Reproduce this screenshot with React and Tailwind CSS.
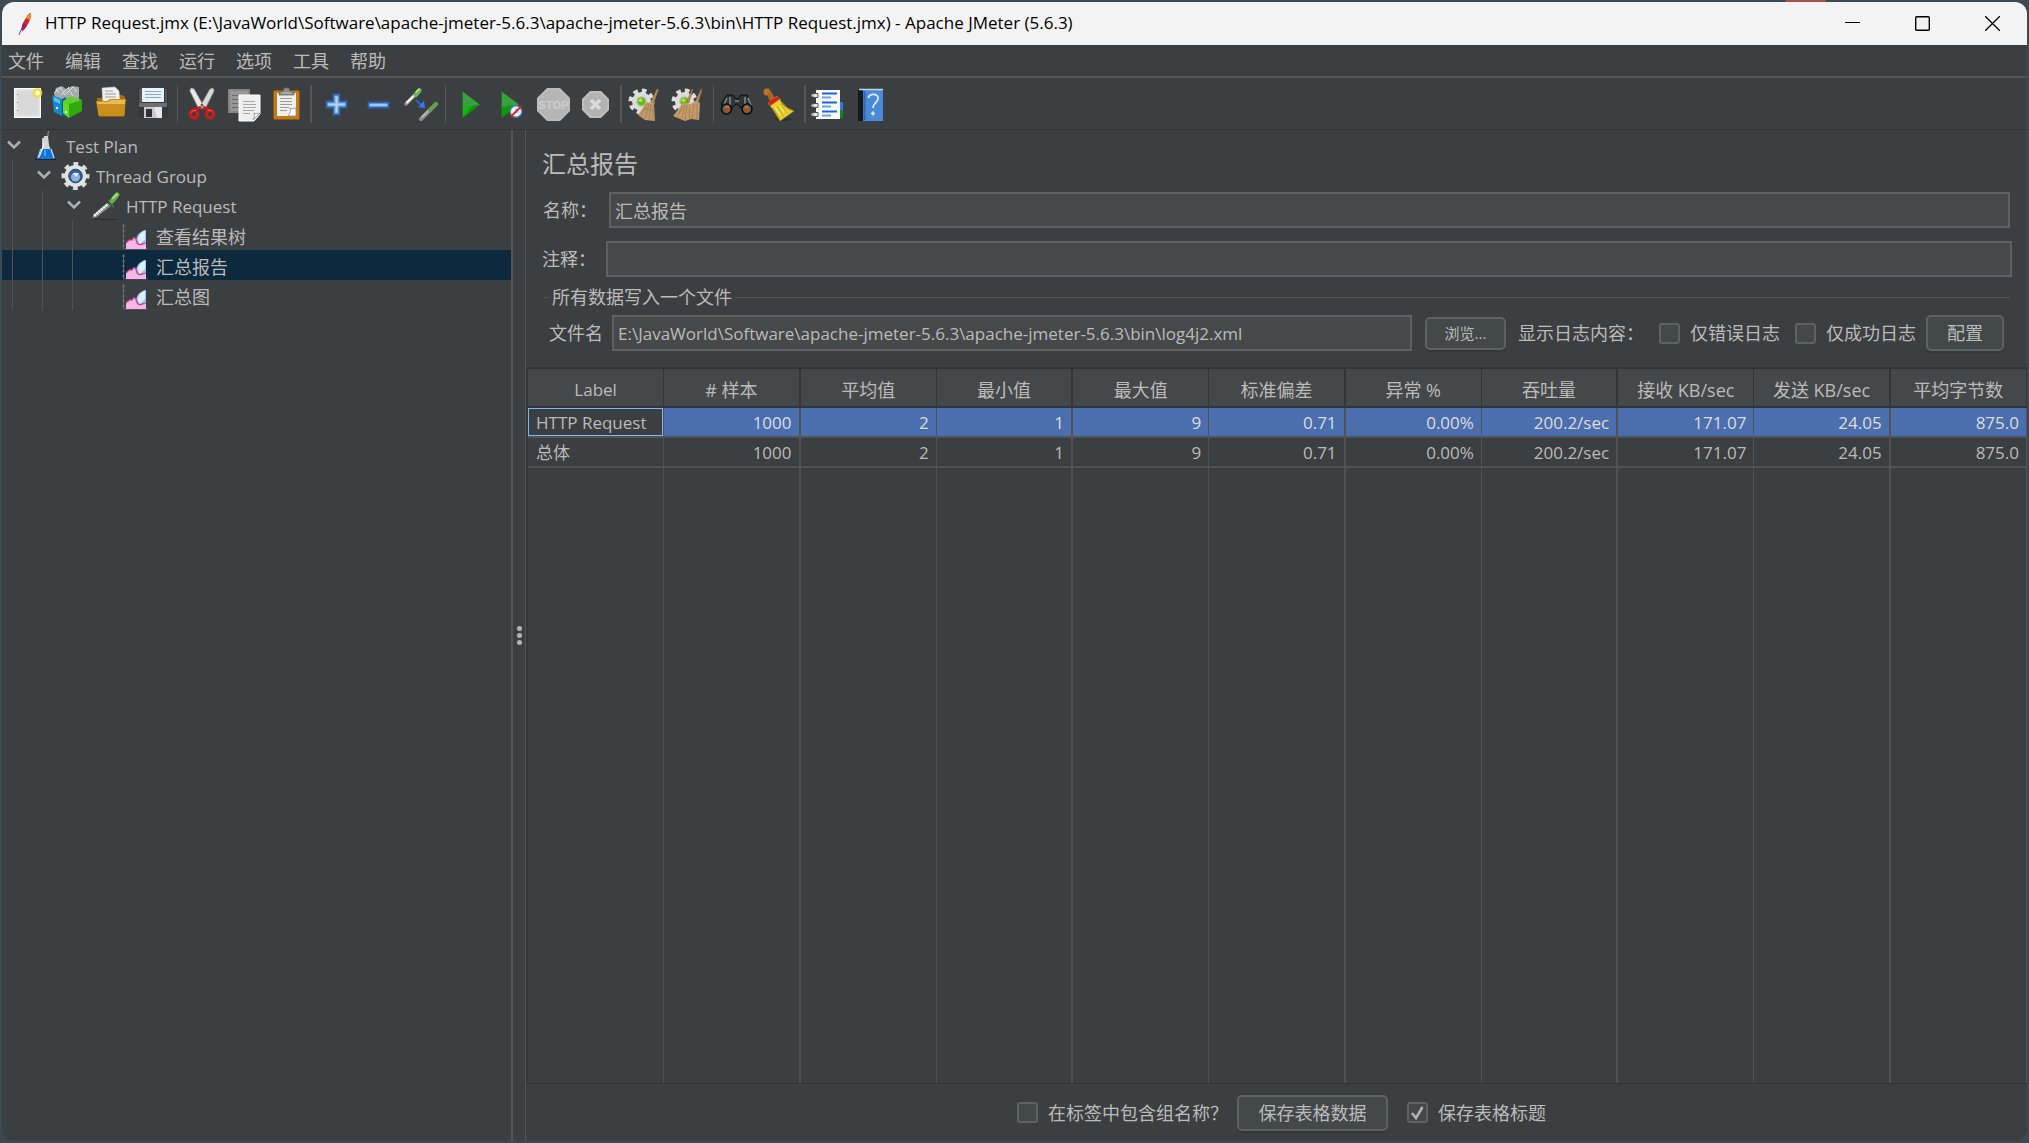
import { useState } from "react";

const MENUS = ["文件", "编辑", "查找", "运行", "选项", "工具", "帮助"];

const COLUMNS = [
  "Label",
  "# 样本",
  "平均值",
  "最小值",
  "最大值",
  "标准偏差",
  "异常 %",
  "吞吐量",
  "接收 KB/sec",
  "发送 KB/sec",
  "平均字节数",
];

const ROWS = [
  ["HTTP Request", "1000", "2", "1", "9", "0.71", "0.00%", "200.2/sec", "171.07", "24.05", "875.0"],
  ["总体", "1000", "2", "1", "9", "0.71", "0.00%", "200.2/sec", "171.07", "24.05", "875.0"],
];

const TREE = [
  { label: "Test Plan", depth: 0, icon: FlaskIcon, open: true },
  { label: "Thread Group", depth: 1, icon: GearIcon, open: true },
  { label: "HTTP Request", depth: 2, icon: PipetteIcon, open: true },
  { label: "查看结果树", depth: 3, icon: ChartIcon },
  { label: "汇总报告", depth: 3, icon: ChartIcon },
  { label: "汇总图", depth: 3, icon: ChartIcon },
];

const TOOLBAR = [
  [
    ["New", NewIcon],
    ["Templates", TemplatesIcon],
    ["Open", OpenIcon],
    ["Save", SaveIcon],
  ],
  [
    ["Cut", CutIcon],
    ["Copy", CopyIcon],
    ["Paste", PasteIcon],
  ],
  [
    ["Expand All", PlusIcon],
    ["Collapse All", MinusIcon],
    ["Toggle", ToggleIcon],
  ],
  [
    ["Start", StartIcon],
    ["Start no pauses", StartNoPauseIcon],
    ["Stop", StopIcon],
    ["Shutdown", ShutdownIcon],
  ],
  [
    ["Clear", ClearIcon],
    ["Clear All", ClearAllIcon],
  ],
  [
    ["Search", BinocularsIcon],
    ["Reset Search", BroomIcon],
  ],
  [
    ["Function Helper", FunctionIcon],
    ["Help", HelpIcon],
  ],
];

function Icon({ children }) {
  return (
    <svg className="h-[34px] w-[34px] overflow-visible" viewBox="0 0 34 34" fill="none" aria-hidden="true">
      {children}
    </svg>
  );
}

function NewIcon() {
  return (
    <Icon>
      <rect x="5.500" y="3.500" width="26" height="29" fill="#e4e4e4" stroke="#fff" />
      <rect x="9" y="6" width="20" height="24" fill="#d9d9d9" />
      <path d="M8 9.500h1M8 17.500h1M8 25.500h1" stroke="#8a8a8a" />
      <circle cx="28.500" cy="8" r="4.800" fill="#efdc35" opacity=".85" />
      <circle cx="28.500" cy="8" r="2.400" fill="#fffde0" />
    </Icon>
  );
}

function TemplatesIcon() {
  return (
    <Icon>
      <path d="M3 9 5 3l6-2 4 3 6-3 7 1v12l-6 4H6z" fill="#a5abad" />
      <path d="m5 4 3 4m1-6 5 8m3-7 5 8m0-9 4 5m-16 3 8-8m-4 8 8-8m-19 6 6-5" stroke="#d8dcdd" />
      <path d="m1 10 10 4v17l-8-4z" fill="#1488c8" />
      <path d="m3 12 6 3v4l-6-3z" fill="#5cc0f0" />
      <path d="m11 14 4-2v20l-4-1z" fill="#0b5f94" />
      <path d="m12 16 7-4 12 3v11l-13 7-6-5z" fill="#2fa90b" />
      <path d="m12 16 6 3v14l-6-5z" fill="#5fdc22" />
      <path d="m12 16 7-4 12 3-13 4z" fill="#5fd02c" />
      <circle cx="15" cy="27" r="1.200" fill="#e9ffe0" />
      <circle cx="6" cy="23" r="1.200" fill="#d8f2ff" />
    </Icon>
  );
}

function OpenIcon() {
  return (
    <Icon>
      <path d="M4 13h5v-3h20l3 2v18H5z" fill="#a86f08" />
      <path d="m9 3 13-1 4 4 1 13H10z" fill="#f1f1f1" stroke="#c9c9c9" strokeWidth=".6" />
      <path d="M12 6h8M12 9h11M12 12h11" stroke="#9a9a9a" />
      <path d="M3 16h11l3-2h16l-2 18H6z" fill="#c98f1a" />
      <path d="M4 17h11l3-2h14l-.4 4H4.500z" fill="#e8bd58" />
      <path d="M6 31.500h25" stroke="#8b5b04" />
    </Icon>
  );
}

function SaveIcon() {
  return (
    <Icon>
      <path d="M3 3h30v30H5l-2-3z" fill="#36373a" />
      <path d="M4 4h3v14H4zM30 4h2v14h-2z" fill="#55575b" />
      <path d="M7 3h22v14H7z" fill="#e9f1f9" />
      <path d="M10 6.500h16M10 9.500h16M10 12.500h16" stroke="#86a9cc" />
      <path d="M4 18h28v4H4z" fill="#6d6f73" />
      <path d="M9 22h18v11H9z" fill="#c9cacc" />
      <path d="M11 24h6v8h-6z" fill="#303134" />
      <path d="M19 22h8v11h-5z" fill="#e8e8e9" />
    </Icon>
  );
}

function CutIcon() {
  return (
    <Icon>
      <path d="m6 1 3 1 9 16-2 4-3-2L5 4z" fill="#e8e8e6" stroke="#a8a8a6" strokeWidth=".7" />
      <path d="m28 1-3 1-9 16 2 4 3-2 8-16z" fill="#d9d9d7" stroke="#9c9c9a" strokeWidth=".7" />
      <circle cx="17" cy="18" r="1.300" fill="#55585a" />
      <ellipse cx="9" cy="27" rx="3.600" ry="3.900" stroke="#d81818" strokeWidth="3" />
      <ellipse cx="25" cy="27" rx="3.600" ry="3.900" stroke="#d81818" strokeWidth="3" />
      <path d="m10 23 6-3m8 3-6-3" stroke="#d81818" strokeWidth="3" />
      <path d="M6 25.500q2-3 5-2M23 23.500q3-1 4 1" stroke="#ff7064" strokeWidth=".8" />
    </Icon>
  );
}

function CopyIcon() {
  return (
    <Icon>
      <path d="M1 2h22v24H1z" fill="#858585" />
      <path d="M3 4h18v20H3z" fill="#979797" />
      <path d="M5 8.500h13M5 12.500h7M5 16.500h7M5 20.500h7" stroke="#6b6b6b" />
      <path d="M12 8h21v19l-6 7H12z" fill="#efefef" stroke="#fff" />
      <path d="M16 14.500h12M16 17.500h13M16 20.500h13M16 23.500h11M16 26.500h7" stroke="#a8a8a8" />
      <path d="M33 26c-2 1-4 1-6 0 1 3 0 5-1 7z" fill="#fff" stroke="#8d8d8d" strokeWidth=".8" />
    </Icon>
  );
}

function PasteIcon() {
  return (
    <Icon>
      <rect x="4.500" y="3.500" width="26" height="29" rx="1.500" fill="#c07c1c" stroke="#8d5508" />
      <path d="M8 6h19v23H8z" fill="#f0f0ee" />
      <path d="M11 11.500h12M11 14.500h12M11 17.500h12M11 20.500h9M11 23.500h7" stroke="#9b9b99" />
      <path d="M27 21c-2 1-4 1-6 0 1 3 0 5-2 8h8z" fill="#fff" stroke="#8d8d8b" strokeWidth=".8" />
      <path d="M10 8V5h4l1-4h5l1 4h4v3z" fill="#8e8f8a" stroke="#5d5e5a" strokeWidth=".7" />
      <path d="M12 6h11" stroke="#c2c3be" />
    </Icon>
  );
}

function PlusIcon() {
  return (
    <Icon>
      <path d="M14.500 7.500h6v7h7v6h-7v7h-6v-7h-7v-6h7z" fill="#8fbbe8" stroke="#2c63b0" strokeWidth="1.800" />
      <path d="M17.500 10v15M10 17.500h15" stroke="#b4d2f2" strokeWidth="1.200" />
    </Icon>
  );
}

function MinusIcon() {
  return (
    <Icon>
      <path d="M7.500 15.500h20v5h-20z" fill="#9dc5ee" stroke="#2c63b0" strokeWidth="1.800" />
    </Icon>
  );
}

function ToggleIcon() {
  return (
    <Icon>
      <path d="m3 17 10-10" stroke="#8a8d8b" strokeWidth="3.600" strokeLinecap="round" />
      <path d="m4 15.500 9-9" stroke="#f0f1ef" strokeWidth="2.400" strokeLinecap="round" />
      <path d="m12.500 8 4-4.500" stroke="#6db648" strokeWidth="4.400" strokeLinecap="round" />
      <path d="m13 5 3-3" stroke="#c5e8b0" strokeWidth="1.400" strokeLinecap="round" />
      <path d="m13 13 5 5" stroke="#2f6fe0" strokeWidth="1.600" />
      <path d="m22 21-7-1 6-6z" fill="#2f7af5" />
      <path d="m18 32 9-9" stroke="#8b8e8b" strokeWidth="4" strokeLinecap="round" />
      <path d="m19 30 8-8" stroke="#bcbebb" strokeWidth="1.700" strokeLinecap="round" />
      <path d="m27 23 6-6" stroke="#6b9a50" strokeWidth="4.200" strokeLinecap="round" />
    </Icon>
  );
}

function StartIcon() {
  return (
    <Icon>
      <path d="m9.500 4.500 17.500 13L9.500 31z" fill="#0c9a0c" />
      <path d="m10 5 16.500 12.500L10 20z" fill="#3a9f40" />
      <path d="m10 20 9-1.500-6 8-3 3z" fill="#14b414" />
    </Icon>
  );
}

function StartNoPauseIcon() {
  return (
    <Icon>
      <path d="M6.500 4.500 24 17.500 6.500 31z" fill="#0c9a0c" />
      <path d="M7 5 23.500 17.500 7 20z" fill="#3a9f40" />
      <circle cx="21" cy="24.500" r="5.800" fill="#f2f6fb" stroke="#4a7fb8" strokeWidth="1.400" />
      <path d="M21 21v4h3" stroke="#7b9cc0" />
      <path d="m15.500 30 11-11" stroke="#dc1f1f" strokeWidth="1.800" />
    </Icon>
  );
}

function StopIcon() {
  return (
    <Icon>
      <path d="M10 1h13l10 10v13L23 34H10L0 24V11z" fill="#bcbcbc" />
      <path d="M11 3h11l9 9v11l-9 9H11l-9-9V12z" fill="#b5b5b5" />
      <text
        x="16.500"
        y="22"
        textAnchor="middle"
        fontFamily="Liberation Sans"
        fontSize="11"
        fontWeight="bold"
        fill="#cdcdcd"
      >
        STOP
      </text>
    </Icon>
  );
}

function ShutdownIcon() {
  return (
    <Icon>
      <path d="M11 4h11l8 8v11l-8 8H11l-8-8V12z" fill="#bebebe" />
      <path d="M12 6h9l7 7v9l-7 7h-9l-7-7v-9z" fill="#b3b3b3" />
      <path d="m12 13 9 9m0-9-9 9" stroke="#dadada" strokeWidth="3.800" />
    </Icon>
  );
}

function Cog() {
  return (
    <>
      <circle cx="12.500" cy="14.500" r="10.500" stroke="#dededd" strokeWidth="5" strokeDasharray="4.400 3.850" />
      <circle cx="12.500" cy="14.500" r="9.500" fill="#dcdcdb" />
      <circle cx="12.500" cy="14.500" r="5.500" fill="#c0c5bb" />
      <circle cx="12.500" cy="14.500" r="4" fill="#6cbb12" />
      <circle cx="11.500" cy="13.300" r="1.700" fill="#b0ea62" />
    </>
  );
}

function ClearIcon() {
  return (
    <Icon>
      <Cog />
      <path d="m28 2 1.500.500-5 14-3-1z" fill="#b98f5c" stroke="#87633a" strokeWidth=".6" />
      <path d="m18 15 7 2 1 17-10-1-7-5z" fill="#c39a69" />
      <path d="m18 17-6 11m8-11-4 15m6-15-2 16m4-15v15M15 21l9 3" stroke="#a27d4c" strokeWidth=".8" />
    </Icon>
  );
}

function ClearAllIcon() {
  return (
    <Icon>
      <g transform="translate(1)">
        <Cog />
      </g>
      <path d="m21 2 1 .500-4 13-2-1zM30 2l1 .500-4 14-3-1z" fill="#b98f5c" stroke="#87633a" strokeWidth=".6" />
      <path d="m12 16 7 1 6-3 4 2-1 17-8-1-6 2-12-5z" fill="#c39a69" />
      <path d="M12 18 7 29m7-11-3 13m5-13-2 15m5-13-1 12m5-15-2 15m5-16v16" stroke="#a27d4c" strokeWidth=".8" />
    </Icon>
  );
}

function BinocularsIcon() {
  return (
    <Icon>
      <path d="M6 8h6l3 4h2l3-4h6l4 9-6 5-5-2-3-3h-1l-3 3-6 2-6-5z" fill="#333436" stroke="#08090a" />
      <path d="m6 11-3 7m6-8v9M24 10v9m3-8 3 7M14 14h4" stroke="#858789" strokeWidth="1.600" />
      <circle cx="5.500" cy="22" r="5" fill="#5d5e60" stroke="#08090a" strokeWidth="1.600" />
      <circle cx="26" cy="22" r="5" fill="#5d5e60" stroke="#08090a" strokeWidth="1.600" />
      <circle cx="6" cy="22.500" r="2.900" fill="#a45417" />
      <circle cx="25.500" cy="22.500" r="2.900" fill="#a45417" />
      <path d="M4 21q1-2 4-1m16 0q2-1 3 1" stroke="#d49a68" />
    </Icon>
  );
}

function BroomIcon() {
  return (
    <Icon>
      <path d="M11 31h19l-5 3H15z" fill="#2f3132" />
      <circle cx="4" cy="5" r="3.700" fill="#b9762f" stroke="#784714" strokeWidth=".8" />
      <path d="m4 7 4-3 4 8-5 3z" fill="#a9682a" />
      <path d="m5 16 9-7 3 3c2 7 7 9 14 12l-14 10c-3-5-5-9-9-14z" fill="#e9cf2f" stroke="#a98e0c" strokeWidth=".7" />
      <path d="m10 21 7 11m-3-13 7 11m-4-13 8 10m-6-12 8 9" stroke="#b99c12" strokeWidth=".8" />
      <path d="m12 20 5 8m-1-10 5 7" stroke="#f8ec84" strokeWidth="1.200" />
      <path d="m5 15 10-6 2 3-10 7z" fill="#d22020" />
    </Icon>
  );
}

function FunctionIcon() {
  return (
    <Icon>
      <path d="M27 15h3v8h-3z" fill="#2f7ce0" />
      <path d="M27 23h3v8h-3z" fill="#0c8a12" />
      <path d="M3 3h24v29H3z" fill="#fafafa" />
      <path d="M9 6.500h15M9 15.500h15M9 24.500h15" stroke="#1a62e8" strokeWidth="2" />
      <path d="M9 10.500h9M9 19.500h9M9 28.500h9" stroke="#6da0f4" strokeWidth="2" />
      <path d="M0 6.500h5v4H0zM0 16.500h5v4H0zM0 25.500h5v4H0z" fill="#e4e4e4" stroke="#555" />
      <path d="M-1.500 8.500h2M-1.500 18.500h2M-1.500 27.500h2" stroke="#dcdcdc" strokeWidth="2" />
    </Icon>
  );
}

function HelpIcon() {
  return (
    <Icon>
      <path d="M3 2h7v32H3z" fill="#17181a" />
      <path d="M8 2h20v32H8z" fill="#4a8bd8" />
      <path d="M4 2.500h24" stroke="#c9d2dc" strokeWidth="1.400" />
      <path d="M9.500 4v29" stroke="#2f67ad" strokeWidth="2" />
      <path d="M13.500 11c0-5 10-5 9.500.500 0 4-5 4.500-5 9.500" stroke="#dcebff" strokeWidth="1.800" />
      <path d="M16 26.500h4M18 24.500v4" stroke="#dcebff" strokeWidth="1.600" />
    </Icon>
  );
}

function TreeIcon({ children }) {
  return (
    <svg className="ml-[10px] h-[30px] w-[33px] overflow-visible" viewBox="0 0 33 30" fill="none" aria-hidden="true">
      {children}
    </svg>
  );
}

function FlaskIcon() {
  return (
    <TreeIcon>
      <path d="M4 29.500h21" stroke="#222" />
      <path d="M13 6h4l1 9 5 14H7l5-14z" fill="#cfd6da" />
      <path d="M17 6V3l1-2" stroke="#9a9da0" />
      <path d="M11 19h9l3.500 10h-17z" fill="#1273dc" />
      <path d="M12 8v9l-4 10" stroke="#fff" strokeWidth="1.400" />
      <path d="m7 28 3-9M23 28l-3-9" stroke="#9ecbf7" strokeWidth="1.600" />
      <path d="M14 20v6" stroke="#67b1ff" strokeWidth="1.500" />
    </TreeIcon>
  );
}

function GearIcon() {
  return (
    <TreeIcon>
      <circle
        cx="14.500"
        cy="16"
        r="11.500"
        stroke="#dcdcdb"
        strokeWidth="5"
        strokeDasharray="4.520 4.510"
        strokeDashoffset="2.260"
      />
      <circle cx="14.500" cy="16" r="11" fill="#e2e2e1" />
      <circle cx="14.500" cy="16" r="6.800" fill="#315a99" stroke="#27477a" />
      <circle cx="14.500" cy="17" r="4.500" fill="#8fb2da" />
      <path d="M12 13h6l-3 4z" fill="#e4effa" />
    </TreeIcon>
  );
}

function PipetteIcon() {
  return (
    <TreeIcon>
      <path d="M3 29.500h22" stroke="#2a2c2d" />
      <path d="m1 28 2-4 13-11 4 3L6 27z" fill="#858785" />
      <path d="m3 26 14-12" stroke="#f4f5f3" strokeWidth="2.400" strokeDasharray="2.400 .6" />
      <path d="m18 11 4 5" stroke="#3c6e2a" strokeWidth="2.600" strokeLinecap="round" />
      <path d="m21 11 5-6" stroke="#66ad48" strokeWidth="5" strokeLinecap="round" />
      <path d="m22 8 4-4" stroke="#a6dc8a" strokeWidth="2.200" strokeLinecap="round" />
    </TreeIcon>
  );
}

function ChartIcon() {
  return (
    <TreeIcon>
      <path d="M2.500 4v25h24" stroke="#66686a" strokeWidth="1" />
      <path d="M1 6h3M1 11h3M1 16h3M1 21h3M1 26h3" stroke="#77797b" strokeWidth=".8" />
      <path d="M15 22c0-6 3-10 9-12h1v18h-9z" fill="#9cc5f3" />
      <path d="M17 20c0-4 3-8 7-9v8l-5 5z" fill="#e0eefd" />
      <path d="M5 23c2-2 3-4 5-3s2-4 4-2 1 4 3 6c3 2 5-1 8-1v6H5z" fill="#f5b6ea" />
      <path d="M5 23c2-2 3-4 5-3s2-4 4-2 1 4 3 6c3 2 5-1 8-1" stroke="#c4407f" strokeWidth="1.200" />
    </TreeIcon>
  );
}

function TreeRow({ node, selected, onSelect }) {
  const NodeIcon = node.icon;
  return (
    <li>
      <button
        type="button"
        onClick={onSelect}
        className={`flex h-[30px] w-full items-center pl-[5px] text-left ${selected ? "bg-[#0d293e]" : ""}`}
      >
        {Array.from({ length: node.depth }, (_, i) => (
          <span key={i} className="h-full w-[30px] pl-[5px]">
            <span className="block h-full border-l border-[#505355]" />
          </span>
        ))}
        <svg className="h-[10px] w-[14px]" viewBox="0 0 14 10" fill="none" aria-hidden="true">
          {node.open && <path d="m1 1.500 6 6 6-6" stroke="#adadad" strokeWidth="2.600" />}
        </svg>
        <NodeIcon />
        <span className={`ml-[2px] pt-[3px] ${node.depth === 3 ? "text-[18px]" : ""}`}>{node.label}</span>
      </button>
    </li>
  );
}

function TextField({ id, value, className = "" }) {
  return (
    <input
      id={id}
      type="text"
      defaultValue={value}
      className={`h-9 min-w-0 flex-1 border-2 border-[#5f6161] bg-[#45494a] px-1 text-[#bbbbbb] outline-none ${className}`}
    />
  );
}

function Check({ label, checked = false }) {
  return (
    <label className="flex items-center gap-[10px] whitespace-nowrap text-[18px]">
      <span className="relative flex h-[21px] w-[21px]">
        <input
          type="checkbox"
          defaultChecked={checked}
          className="peer h-[21px] w-[21px] appearance-none rounded-[3px] border-2 border-[#5f6263] bg-[#43494a]"
        />
        <svg
          className="pointer-events-none absolute inset-0 hidden h-[21px] w-[21px] peer-checked:block"
          viewBox="0 0 21 21"
          fill="none"
          aria-hidden="true"
        >
          <path d="m5 11 4 5 6.500-11" stroke="#b0b2b3" strokeWidth="2.600" />
        </svg>
      </span>
      {label}
    </label>
  );
}

function PushButton({ children, className }) {
  return (
    <button
      type="button"
      className={`whitespace-nowrap rounded-[5px] border-2 border-[#5e6162] bg-[#43494a] shadow-[0_2px_1px_#35383a] ${className}`}
    >
      {children}
    </button>
  );
}

function TitleBar() {
  return (
    <header className="flex h-[43px] items-center bg-[#f3f3f3] text-black">
      <svg className="ml-[14px] h-6 w-5" viewBox="0 0 20 24" fill="none" aria-hidden="true">
        <path d="M14 1c2 0 1 5-1 9-2 4-4 7-7 9-1-4 1-9 4-13 1-2 2-4 4-5z" fill="#d0222f" />
        <path d="M14 1c2 0 1 4-.5 7L10 6c1-2 2-4 4-5z" fill="#f08b22" />
        <path d="M6 19c-1-2 0-5 1-8l4 2c-1 3-3 5-5 6z" fill="#a11f63" />
        <path d="M8 13c-2 3-4 7-5 10" stroke="#5d2a6b" strokeWidth=".9" />
      </svg>
      <h1 className="ml-[9px] flex-1 truncate pb-[2px]">
        HTTP Request.jmx (E:\JavaWorld\Software\apache-jmeter-5.6.3\apache-jmeter-5.6.3\bin\HTTP Request.jmx) - Apache
        JMeter (5.6.3)
      </h1>
      <button type="button" aria-label="Minimize" className="flex h-full w-[70px] items-center justify-center">
        <svg className="h-[15px] w-[15px]" viewBox="0 0 15 15" fill="none">
          <path d="M0 6.500h15" stroke="#000" />
        </svg>
      </button>
      <button type="button" aria-label="Maximize" className="flex h-full w-[70px] items-center justify-center">
        <svg className="h-[15px] w-[15px]" viewBox="0 0 15 15" fill="none">
          <rect x=".7" y=".7" width="13.600" height="13.600" rx="1" stroke="#000" strokeWidth="1.400" />
        </svg>
      </button>
      <button type="button" aria-label="Close" className="flex h-full w-[70px] items-center justify-center">
        <svg className="h-[15px] w-[15px]" viewBox="0 0 15 15" fill="none">
          <path d="m0 0 15 15M15 0 0 15" stroke="#000" strokeWidth="1.300" />
        </svg>
      </button>
    </header>
  );
}

function Toolbar() {
  return (
    <div className="flex h-[52px] items-start border-b border-[#323537] pl-[3px] pt-[7px]">
      {TOOLBAR.map((group, g) => (
        <div key={g} className="flex">
          {g > 0 && (
            <div className="flex w-2 justify-center">
              <span className={g % 2 ? "h-[38px] w-px bg-[#565758]" : "h-[38px] w-[2px] bg-[#565758]"} />
            </div>
          )}
          {group.map(([name, ToolIcon]) => (
            <button key={name} type="button" aria-label={name} className="w-[42px] px-1">
              <ToolIcon />
            </button>
          ))}
        </div>
      ))}
    </div>
  );
}

function SummaryTable() {
  const rule = (i) => (i % 2 ? "border-r-2" : "border-r");
  return (
    <div className="mt-4 flex-1 border-b border-l-2 border-t-2 border-b-[#323537] border-l-[#36393b] border-t-[#323537]">
      <table className="h-full w-full table-fixed border-separate border-spacing-0">
        <thead>
          <tr className="h-[39px]">
            {COLUMNS.map((name, i) => (
              <th
                key={name}
                className={`border-b-2 border-[#323537] bg-[#45484a] p-0 pt-1 font-normal ${name === "Label" ? "" : "text-[18px]"} ${rule(i)}`}
              >
                {name}
              </th>
            ))}
          </tr>
        </thead>
        <tbody>
          {ROWS.map((row, r) => (
            <tr key={row[0]} className={r === 0 ? "h-[30px] text-[#dddddd]" : "h-[30px]"}>
              {row.map((cell, i) =>
                i === 0 ? (
                  <td key={i} className="border-b-2 border-r border-[#505253] p-0 text-[#bbbbbb]">
                    <div
                      className={`flex h-7 items-center border px-[7px] pt-px ${r === 0 ? "border-[#7cb8f8]" : "border-transparent"}`}
                    >
                      {cell}
                    </div>
                  </td>
                ) : (
                  <td
                    key={i}
                    className={`border-b-2 border-[#505253] p-0 pr-[7px] pt-px text-right ${r === 0 ? "bg-[#4b6eaf]" : ""} ${rule(i)}`}
                  >
                    {cell}
                  </td>
                )
              )}
            </tr>
          ))}
          <tr>
            {COLUMNS.map((name, i) => (
              <td key={name} className={`border-[#505253] p-0 ${rule(i)}`} />
            ))}
          </tr>
        </tbody>
      </table>
    </div>
  );
}

export default function App() {
  const [selected, setSelected] = useState(4);

  return (
    <div className="relative h-screen bg-[#3b4a53] p-[2px] font-['Open_Sans','Noto_Sans_CJK_SC',sans-serif] text-[17px] leading-6 text-[#bbbbbb]">
      <div className="absolute left-[88%] top-0 h-[2px] w-10 bg-[#a8504c]" />
      <div className="flex h-full flex-col overflow-hidden rounded-xl bg-[#3c3f41]">
        <TitleBar />
        <nav className="flex h-[33px] items-center gap-[21px] border-b-2 border-[#555555] pl-[6px] text-[18px]">
          {MENUS.map((m) => (
            <button key={m} type="button">
              {m}
            </button>
          ))}
        </nav>
        <Toolbar />

        <div className="flex min-h-0 flex-1">
          <aside className="w-[511px] border-r-2 border-[#555555]">
            <ul>
              {TREE.map((node, i) => (
                <TreeRow key={i} node={node} selected={selected === i} onSelect={() => setSelected(i)} />
              ))}
            </ul>
          </aside>

          <div className="flex w-[13px] flex-col items-center justify-center gap-[2px] border-r border-[#555555]">
            <span className="h-[5px] w-[5px] rounded-full bg-[#b5b5b5]" />
            <span className="h-[5px] w-[5px] rounded-full bg-[#b5b5b5]" />
            <span className="h-[5px] w-[5px] rounded-full bg-[#b5b5b5]" />
          </div>

          <main className="flex min-w-0 flex-1 flex-col">
            <form className="px-[15px]">
              <h2 className="px-px pt-4 text-[24px] leading-9">汇总报告</h2>
              <div className="mt-[10px] flex items-center px-[2px]">
                <label htmlFor="name" className="w-[66px] text-[18px]">
                  名称：
                </label>
                <TextField id="name" value="汇总报告" className="text-[18px]" />
              </div>
              <div className="mt-[13px] flex items-center">
                <label htmlFor="comments" className="w-[65px] pl-px text-[18px]">
                  注释：
                </label>
                <TextField id="comments" value="" />
              </div>

              <fieldset className="mx-[2px] mt-[6px] border-t border-[#555759]">
                <legend className="ml-[6px] px-[3px] text-[18px] leading-7">所有数据写入一个文件</legend>
                <div className="mt-1 flex items-center pl-[6px] pr-[6px]">
                  <label htmlFor="filename" className="w-[63px] text-[18px]">
                    文件名
                  </label>
                  <TextField
                    id="filename"
                    value="E:\JavaWorld\Software\apache-jmeter-5.6.3\apache-jmeter-5.6.3\bin\log4j2.xml"
                  />
                  <PushButton className="ml-[13px] h-[33px] w-[81px] text-[15px]">浏览...</PushButton>
                  <span className="ml-3 mr-[15px] whitespace-nowrap text-[18px]">显示日志内容：</span>
                  <div className="mr-[10px] flex gap-[15px]">
                    <Check label="仅错误日志" />
                    <Check label="仅成功日志" />
                  </div>
                  <PushButton className="h-9 w-[78px] text-[18px]">配置</PushButton>
                </div>
              </fieldset>
            </form>

            <SummaryTable />

            <div className="flex h-[57px] items-center justify-center pl-[10px]">
              <Check label="在标签中包含组名称？" />
              <PushButton className="ml-[9px] mr-[19px] h-9 w-[151px] text-[18px]">保存表格数据</PushButton>
              <Check label="保存表格标题" checked />
            </div>
          </main>
        </div>
      </div>
    </div>
  );
}
